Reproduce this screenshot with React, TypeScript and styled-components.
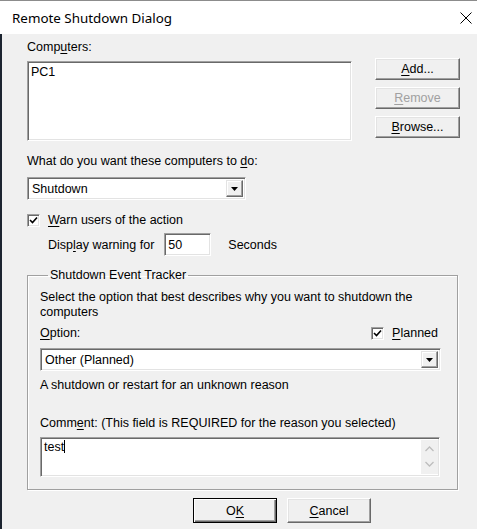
import React from 'react';
import styled, { createGlobalStyle } from 'styled-components';

const Global = createGlobalStyle`
  html, body { margin: 0; padding: 0; background: #fff; }
  body { width: 477px; height: 529px; overflow: hidden; }
`;

const Window = styled.div`
  width: 477px;
  height: 529px;
  box-sizing: border-box;
  border-top: 1px solid #8c8c8c;
  display: flex;
  flex-direction: column;
  font-family: "Liberation Sans", Arial, sans-serif;
  font-size: 12.5px;
  color: #000;
`;

const TitleBar = styled.div`
  height: 33px;
  flex: none;
  background: #fff;
  display: flex;
  align-items: center;
  justify-content: space-between;
  padding: 0 3px 0 12px;
  font-family: "Noto Sans", "Open Sans", sans-serif;
  font-size: 13.4px;
`;

const Close = styled.div`
  width: 16px;
  height: 16px;
  display: flex;
  align-items: center;
  justify-content: center;
`;

const Body = styled.div`
  flex: 1;
  background: #f0f0f0;
  border-left: 2px solid #1c2430;
  padding: 6px 0 0 25px;
  display: flex;
  flex-direction: column;
`;

const Label = styled.div<{ $mt?: number; $ml?: number }>`
  line-height: 14px;
  height: 14px;
  white-space: nowrap;
  margin-top: ${p => p.$mt ?? 0}px;
  margin-left: ${p => p.$ml ?? 0}px;
`;

const U = styled.span`
  text-decoration: underline;
  text-underline-offset: 2px;
`;

const TopRow = styled.div`
  display: flex;
  gap: 23px;
`;

const Col = styled.div`
  display: flex;
  flex-direction: column;
  gap: 7px;
`;

const Sunken = styled.div<{ $w: number; $h: number }>`
  width: ${p => p.$w}px;
  height: ${p => p.$h}px;
  box-sizing: border-box;
  background: #fff;
  border: 1px solid;
  border-color: #a0a0a0 #fff #fff #a0a0a0;
  box-shadow: inset 1px 1px 0 #696969, inset -1px -1px 0 #e3e3e3;
  flex: none;
`;

const ListBox = styled(Sunken)`
  padding: 3px 3px;
  line-height: 14px;
`;

const ButtonCol = styled.div`
  display: flex;
  flex-direction: column;
  gap: 7px;
  padding-top: 18px;
`;

const Button = styled.div<{ $w: number; $h: number; $disabled?: boolean; $default?: boolean }>`
  width: ${p => p.$w}px;
  height: ${p => p.$h}px;
  box-sizing: border-box;
  display: flex;
  align-items: center;
  justify-content: center;
  background: #f0f0f0;
  color: ${p => (p.$disabled ? '#a0a0a0' : '#000')};
  border: 1px solid;
  border-color: ${p => (p.$default ? '#000' : '#fff #696969 #696969 #fff')};
  box-shadow: ${p =>
    p.$default
      ? 'inset 1px 1px 0 #fff, inset -1px -1px 0 #696969, inset -2px -2px 0 #a0a0a0'
      : 'inset -1px -1px 0 #a0a0a0, inset 1px 1px 0 #e3e3e3'};
  flex: none;
`;

const Combo = styled(Sunken)`
  display: flex;
  align-items: center;
  padding: 2px 2px 2px 4px;
`;

const ComboText = styled.div`
  flex: 1;
  line-height: 14px;
`;

const ArrowBtn = styled.div`
  width: 17px;
  height: 17px;
  box-sizing: border-box;
  background: #f0f0f0;
  border: 1px solid;
  border-color: #e3e3e3 #696969 #696969 #e3e3e3;
  box-shadow: inset -1px -1px 0 #a0a0a0, inset 1px 1px 0 #fff;
  display: flex;
  align-items: center;
  justify-content: center;
`;

const CheckRow = styled.div<{ $mt?: number }>`
  display: flex;
  align-items: center;
  gap: 8px;
  height: 14px;
  margin-top: ${p => p.$mt ?? 0}px;
  line-height: 14px;
  white-space: nowrap;
`;

const CheckBox = styled.div`
  width: 13px;
  height: 13px;
  box-sizing: border-box;
  background: #fff;
  border: 1px solid;
  border-color: #a0a0a0 #fff #fff #a0a0a0;
  box-shadow: inset 1px 1px 0 #696969, inset -1px -1px 0 #e3e3e3;
  display: flex;
  align-items: center;
  justify-content: center;
  flex: none;
`;

const DisplayRow = styled.div`
  display: flex;
  align-items: center;
  margin-top: 6px;
  padding-left: 21px;
  height: 23px;
  white-space: nowrap;
`;

const NumInput = styled(Sunken)`
  margin-left: 10px;
  margin-right: 17px;
  padding: 4px 3px;
  line-height: 14px;
`;

const Group = styled.fieldset`
  margin: 12px 0 0 0;
  width: 431px;
  box-sizing: border-box;
  border: 1px solid #a0a0a0;
  box-shadow: 1px 1px 0 #fff, inset 1px 1px 0 #fff;
  padding: 8px 16px 12px 12px;
  min-width: 0;
`;

const Legend = styled.legend`
  margin-left: 8px;
  padding: 0 2px;
  line-height: 14px;
`;

const Para = styled.div`
  line-height: 15px;
`;

const OptionRow = styled.div`
  display: flex;
  justify-content: space-between;
  align-items: center;
  margin-top: 6px;
  height: 14px;
  padding-right: 3px;
`;

const CommentBox = styled(Sunken)`
  margin-top: 7px;
  display: flex;
  padding: 2px 1px 2px 2px;
`;

const CommentText = styled.div`
  flex: 1;
  line-height: 14px;
  padding-left: 1px;
`;

const Caret = styled.span`
  display: inline-block;
  width: 1px;
  height: 13px;
  background: #000;
  vertical-align: -2px;
`;

const ScrollBar = styled.div`
  width: 17px;
  background: #f0f0f0;
  display: flex;
  flex-direction: column;
  align-items: center;
  justify-content: space-between;
  padding: 6px 0 7px;
`;

const Footer = styled.div`
  display: flex;
  gap: 10px;
  margin-top: 8px;
  padding-left: 166px;
`;

const Chevron = ({ up }: { up?: boolean }) => (
  <svg width="9" height="6" viewBox="0 0 9 6">
    <path
      d={up ? 'M0.5 5 L4.5 1 L8.5 5' : 'M0.5 1 L4.5 5 L8.5 1'}
      fill="none"
      stroke="#bdbdbd"
      strokeWidth="1.3"
    />
  </svg>
);

const DownArrow = () => (
  <svg width="7" height="4" viewBox="0 0 7 4">
    <path d="M0 0 H7 L3.5 4 Z" fill="#000" />
  </svg>
);

const Check = () => (
  <svg width="9" height="9" viewBox="0 0 9 9">
    <path d="M1 4 L3.5 6.5 L8 1.5" fill="none" stroke="#000" strokeWidth="1.6" />
  </svg>
);

export default function App() {
  return (
    <>
      <Global />
      <Window>
        <TitleBar>
          <span>Remote Shutdown Dialog</span>
          <Close>
            <svg width="12" height="12" viewBox="0 0 12 12">
              <path d="M0.5 0.5 L11.5 11.5 M11.5 0.5 L0.5 11.5" stroke="#000" strokeWidth="1" />
            </svg>
          </Close>
        </TitleBar>
        <Body>
          <TopRow>
            <Col>
              <Label>
                Comp<U>u</U>ters:
              </Label>
              <ListBox $w={325} $h={80}>PC1</ListBox>
            </Col>
            <ButtonCol>
              <Button $w={85} $h={22}>
                <U>A</U>dd...
              </Button>
              <Button $w={85} $h={22} $disabled>
                <U>R</U>emove
              </Button>
              <Button $w={85} $h={22}>
                <U>B</U>rowse...
              </Button>
            </ButtonCol>
          </TopRow>

          <Label $mt={13}>
            What do you want these computers to <U>d</U>o:
          </Label>
          <Combo $w={219} $h={23} style={{ marginTop: 9 }}>
            <ComboText>Shutdown</ComboText>
            <ArrowBtn>
              <DownArrow />
            </ArrowBtn>
          </Combo>

          <CheckRow $mt={13}>
            <CheckBox>
              <Check />
            </CheckBox>
            <span>
              <U>W</U>arn users of the action
            </span>
          </CheckRow>

          <DisplayRow>
            <span>
              Disp<U>l</U>ay warning for
            </span>
            <NumInput $w={47} $h={23}>50</NumInput>
            <span>Seconds</span>
          </DisplayRow>

          <Group>
            <Legend>Shutdown Event Tracker</Legend>
            <Para>
              Select the option that best describes why you want to shutdown the
              <br />
              computers
            </Para>
            <OptionRow>
              <span>
                <U>O</U>ption:
              </span>
              <CheckRow>
                <CheckBox>
                  <Check />
                </CheckBox>
                <span>
                  <U>P</U>lanned
                </span>
              </CheckRow>
            </OptionRow>
            <Combo $w={401} $h={23} style={{ marginTop: 8 }}>
              <ComboText>Other (Planned)</ComboText>
              <ArrowBtn>
                <DownArrow />
              </ArrowBtn>
            </Combo>
            <Label $mt={7}>A shutdown or restart for an unknown reason</Label>
            <Label $mt={24}>
              Comm<U>e</U>nt: (This field is REQUIRED for the reason you selected)
            </Label>
            <CommentBox $w={400} $h={40}>
              <CommentText>
                test
                <Caret />
              </CommentText>
              <ScrollBar>
                <Chevron up />
                <Chevron />
              </ScrollBar>
            </CommentBox>
          </Group>

          <Footer>
            <Button $w={84} $h={25} $default>
              O<U>K</U>
            </Button>
            <Button $w={84} $h={25}>
              <U>C</U>ancel
            </Button>
          </Footer>
        </Body>
      </Window>
    </>
  );
}
